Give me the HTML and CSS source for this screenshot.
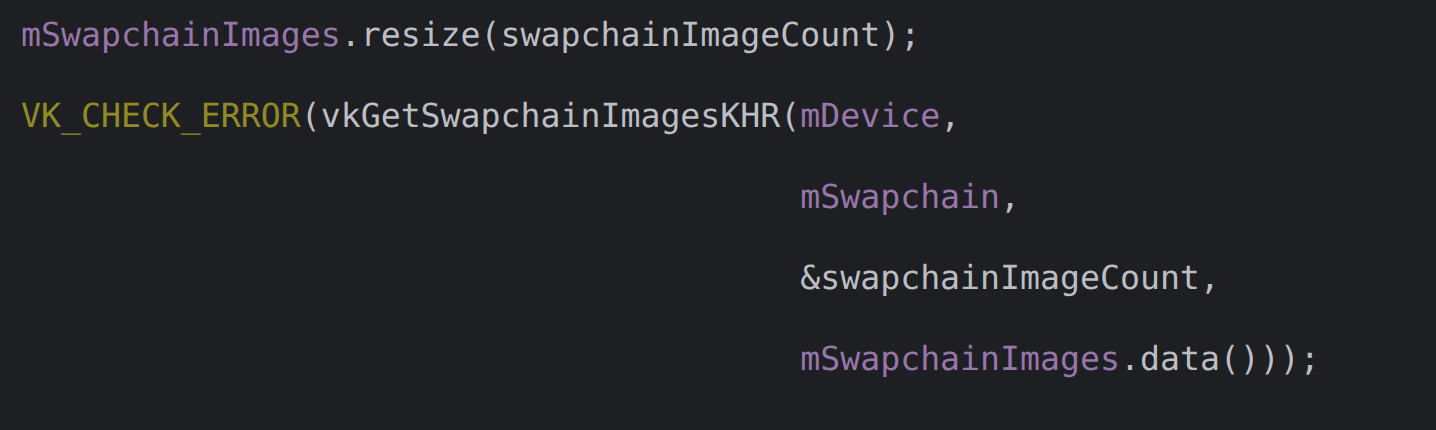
FILE: index.html
```html
<!DOCTYPE html>
<html lang="en">
<head>
  <meta charset="UTF-8" />
  <title>Swapchain images</title>
  <link rel="stylesheet" href="styles.css">
</head>
<body>
  <pre class="code"><span class="field">mSwapchainImages</span>.resize(swapchainImageCount);
<span class="macro">VK_CHECK_ERROR</span>(vkGetSwapchainImagesKHR(<span class="field">mDevice</span>,
                                       <span class="field">mSwapchain</span>,
                                       &amp;swapchainImageCount,
                                       <span class="field">mSwapchainImages</span>.data()));</pre>
</body>
</html>
```
FILE: styles.css
```css
* { box-sizing: border-box; }

html, body {
  margin: 0;
  height: 100%;
  background: #1e1f22;
  overflow: hidden;
}

.code {
  margin: -6px 0 0 0;
  padding: 0 0 0 21px;
  font-family: 'DejaVu Sans Mono', monospace;
  font-size: 33.2px;
  line-height: 81px;
  color: #bcbec4;
  text-rendering: geometricPrecision;
}

.field {
  color: #9876aa;
}

.macro {
  color: #908b25;
}
```
